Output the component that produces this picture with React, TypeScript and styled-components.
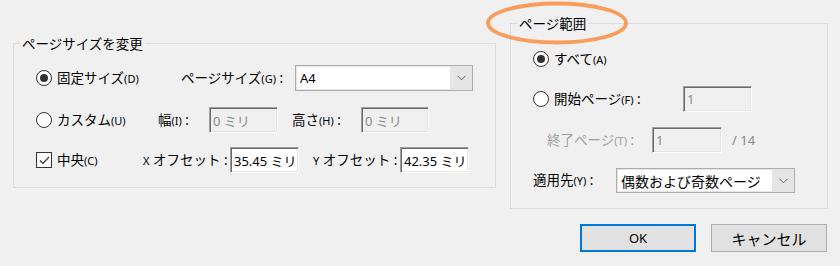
import React from "react";
import styled, { createGlobalStyle } from "styled-components";

const Global = createGlobalStyle`
  html, body { margin: 0; padding: 0; background: #f0f0f0; }
  body {
    font-family: "Noto Sans", "Noto Sans CJK JP", sans-serif;
    color: #000;
  }
  * { box-sizing: border-box; }
`;

const Page = styled.div`
  position: relative;
  width: 840px;
  height: 266px;
  overflow: hidden;
  background: #f0f0f0;
`;

const Top = styled.div`
  display: flex;
  align-items: flex-start;
  gap: 14px;
  padding-left: 13px;
`;

const Group = styled.fieldset<{ $top: number; $w: number; $h: number; $pt: number }>`
  margin: ${(p) => p.$top}px 0 0 0;
  width: ${(p) => p.$w}px;
  height: ${(p) => p.$h}px;
  min-width: 0;
  border: 1px solid #dcdcdc;
  padding: ${(p) => p.$pt}px 0 0 22px;
`;

const Legend = styled.legend`
  font-family: "Noto Sans CJK JP", sans-serif;
  font-size: 13.5px;
  line-height: 20px;
  padding: 0 2px;
  margin-left: -16px;
`;

const Row = styled.div<{ $mt?: number; $h?: number }>`
  display: flex;
  align-items: center;
  height: ${(p) => p.$h ?? 26}px;
  margin-top: ${(p) => p.$mt ?? 0}px;
`;

const Cell = styled.div<{ $w?: number; $ml?: number }>`
  flex: none;
  display: flex;
  align-items: center;
  width: ${(p) => (p.$w ? `${p.$w}px` : "auto")};
  margin-left: ${(p) => p.$ml ?? 0}px;
  white-space: nowrap;
`;

const Label = styled.span<{ $disabled?: boolean; $ml?: number }>`
  font-size: 13.5px;
  line-height: 20px;
  margin-left: ${(p) => p.$ml ?? 0}px;
  color: ${(p) => (p.$disabled ? "#a0a0a0" : "#000")};
`;

const Key = styled.span`
  font-family: "Noto Sans", sans-serif;
  font-size: 11px;
`;

const Radio = styled.span<{ $checked?: boolean }>`
  flex: none;
  width: 16px;
  height: 16px;
  border-radius: 50%;
  border: 1px solid #333;
  background: #fff;
  display: inline-flex;
  align-items: center;
  justify-content: center;
  &::after {
    content: "";
    display: ${(p) => (p.$checked ? "block" : "none")};
    width: 8px;
    height: 8px;
    border-radius: 50%;
    background: #333;
  }
`;

const CheckBox = styled.span`
  flex: none;
  width: 16px;
  height: 16px;
  border: 1px solid #333;
  background: #fff;
  display: inline-flex;
  align-items: center;
  justify-content: center;
`;

const TextBox = styled.div<{ $w: number; $disabled?: boolean; $h?: number }>`
  flex: none;
  width: ${(p) => p.$w}px;
  height: ${(p) => p.$h ?? 26}px;
  border-style: solid;
  border-width: 1px;
  border-color: #a0a0a0 #ffffff #ffffff #a0a0a0;
  box-shadow: inset 1px 1px 0 #696969, inset -1px -1px 0 #e3e3e3;
  background: ${(p) => (p.$disabled ? "#f0f0f0" : "#fff")};
  color: ${(p) => (p.$disabled ? "#8a8a8a" : "#000")};
  font-size: 13px;
  display: flex;
  align-items: center;
  padding-left: 3px;
  white-space: nowrap;
`;

const Select = styled.div<{ $w: number; $h: number }>`
  flex: none;
  width: ${(p) => p.$w}px;
  height: ${(p) => p.$h}px;
  border: 1px solid #adadad;
  background: #e5e5e5;
  display: flex;
  padding: 1px 0 1px 1px;
`;

const SelectValue = styled.div<{ $size: number }>`
  flex: 1;
  background: #fff;
  display: flex;
  align-items: center;
  padding-left: 3px;
  font-size: ${(p) => p.$size}px;
  white-space: nowrap;
  overflow: hidden;
`;

const Arrow = styled.div`
  flex: none;
  width: 22px;
  display: flex;
  align-items: center;
  justify-content: center;
`;

const Slash = styled.span`
  font-size: 13px;
  color: #8a8a8a;
  margin-left: 10px;
`;

const Buttons = styled.div`
  display: flex;
  justify-content: flex-end;
  gap: 15px;
  padding-right: 13px;
  margin-top: 15px;
`;

const Button = styled.button<{ $primary?: boolean }>`
  width: 116px;
  height: 28px;
  background: #e1e1e1;
  border: ${(p) => (p.$primary ? "2px solid #0078d7" : "1px solid #adadad")};
  font-family: "Noto Sans", "Noto Sans CJK JP", sans-serif;
  font-size: ${(p) => (p.$primary ? 13 : 15)}px;
  color: #000;
  padding: 0;
  display: flex;
  align-items: center;
  justify-content: center;
`;

const Highlight = styled.svg`
  position: absolute;
  left: 485px;
  top: 0px;
  pointer-events: none;
`;

const Chevron = () => (
  <svg width="9" height="6" viewBox="0 0 9 6">
    <path d="M0.5 0.8 L4.5 4.8 L8.5 0.8" fill="none" stroke="#606060" strokeWidth="1" />
  </svg>
);

const Check = () => (
  <svg width="11" height="9" viewBox="0 0 11 9">
    <path d="M1 4.5 L4 7.5 L10 1" fill="none" stroke="#333" strokeWidth="1.2" />
  </svg>
);

export default function App() {
  return (
    <Page>
      <Global />
      <Top>
        <Group $top={33} $w={483} $h={155} $pt={12}>
          <Legend>ページサイズを変更</Legend>
          <Row>
            <Cell $w={145}>
              <Radio $checked />
              <Label $ml={5}>
                固定サイズ<Key>(D)</Key>
              </Label>
            </Cell>
            <Cell $w={114}>
              <Label>
                ページサイズ<Key>(G)</Key> :
              </Label>
            </Cell>
            <Select $w={178} $h={26}>
              <SelectValue $size={13}>A4</SelectValue>
              <Arrow>
                <Chevron />
              </Arrow>
            </Select>
          </Row>
          <Row $mt={16}>
            <Cell $w={122}>
              <Radio />
              <Label $ml={5}>
                カスタム<Key>(U)</Key>
              </Label>
            </Cell>
            <Cell $w={51}>
              <Label>
                幅<Key>(I)</Key> :
              </Label>
            </Cell>
            <TextBox $w={69} $disabled>
              0 ミリ
            </TextBox>
            <Cell $w={69} $ml={14}>
              <Label>
                高さ<Key>(H)</Key> :
              </Label>
            </Cell>
            <TextBox $w={68} $disabled>
              0 ミリ
            </TextBox>
          </Row>
          <Row $mt={14}>
            <Cell $w={107}>
              <CheckBox>
                <Check />
              </CheckBox>
              <Label $ml={5}>
                中央<Key>(C)</Key>
              </Label>
            </Cell>
            <Cell $w={87}>
              <Label>
                <Key>X</Key> オフセット :
              </Label>
            </Cell>
            <TextBox $w={69}>35.45 ミリ</TextBox>
            <Cell $w={87} $ml={14}>
              <Label>
                <Key>Y</Key> オフセット :
              </Label>
            </Cell>
            <TextBox $w={69}>42.35 ミリ</TextBox>
          </Row>
        </Group>

        <Group $top={13} $w={318} $h={196} $pt={13}>
          <Legend>ページ範囲</Legend>
          <Row>
            <Cell>
              <Radio $checked />
              <Label $ml={5}>
                すべて<Key>(A)</Key>
              </Label>
            </Cell>
          </Row>
          <Row $mt={14}>
            <Cell $w={150}>
              <Radio />
              <Label $ml={5}>
                開始ページ<Key>(F)</Key> :
              </Label>
            </Cell>
            <TextBox $w={69} $disabled>
              1
            </TextBox>
          </Row>
          <Row $mt={15}>
            <Cell $w={105} $ml={14}>
              <Label $disabled>
                終了ページ<Key>(T)</Key> :
              </Label>
            </Cell>
            <TextBox $w={70} $disabled>
              1
            </TextBox>
            <Slash>/ 14</Slash>
          </Row>
          <Row $mt={15} $h={25}>
            <Cell $w={83}>
              <Label>
                適用先<Key>(Y)</Key> :
              </Label>
            </Cell>
            <Select $w={179} $h={25}>
              <SelectValue $size={14}>偶数および奇数ページ</SelectValue>
              <Arrow>
                <Chevron />
              </Arrow>
            </Select>
          </Row>
        </Group>
      </Top>
      <Buttons>
        <Button $primary>OK</Button>
        <Button>キャンセル</Button>
      </Buttons>
      <Highlight width="144" height="48" viewBox="0 0 144 48">
        <ellipse cx="72" cy="23" rx="69" ry="19.5" fill="none" stroke="#f99c5c" strokeWidth="3.8" />
      </Highlight>
    </Page>
  );
}
